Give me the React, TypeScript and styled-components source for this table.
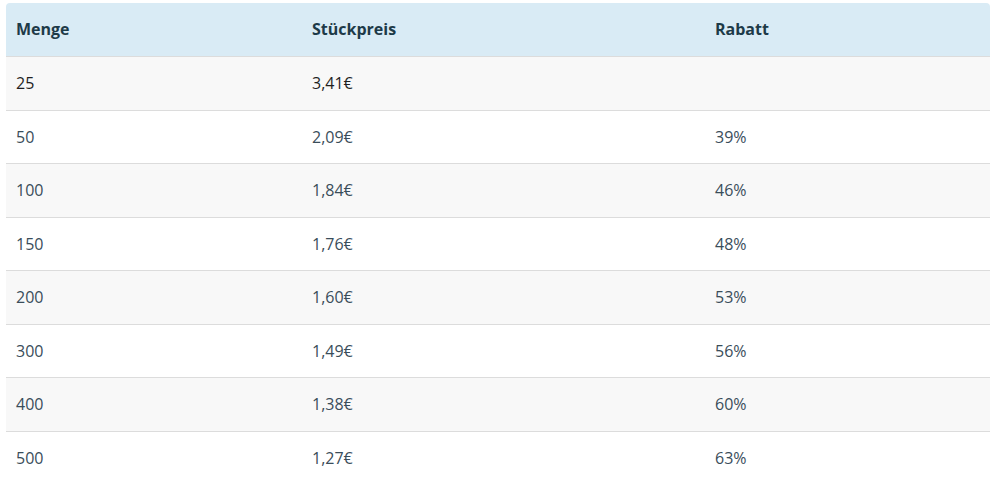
import React from "react";
import styled, { createGlobalStyle } from "styled-components";

const GlobalStyle = createGlobalStyle`
  body {
    margin: 0;
    background: #ffffff;
    font-family: "Open Sans", "Noto Sans", sans-serif;
  }
`;

const rows = [
  { menge: "25", preis: "3,41€", rabatt: "" },
  { menge: "50", preis: "2,09€", rabatt: "39%" },
  { menge: "100", preis: "1,84€", rabatt: "46%" },
  { menge: "150", preis: "1,76€", rabatt: "48%" },
  { menge: "200", preis: "1,60€", rabatt: "53%" },
  { menge: "300", preis: "1,49€", rabatt: "56%" },
  { menge: "400", preis: "1,38€", rabatt: "60%" },
  { menge: "500", preis: "1,27€", rabatt: "63%" },
];

export default function App() {
  return (
    <>
      <GlobalStyle />
      <StyledPage>
        <StyledTable>
          <colgroup>
            <col style={{ width: 296 }} />
            <col style={{ width: 403 }} />
            <col />
          </colgroup>
          <thead>
            <tr>
              <StyledHead $first>Menge</StyledHead>
              <StyledHead>Stückpreis</StyledHead>
              <StyledHead $last>Rabatt</StyledHead>
            </tr>
          </thead>
          <tbody>
            {rows.map((row, i) => (
              <StyledRow key={row.menge} $striped={i % 2 === 0} $dark={i === 0}>
                <StyledCell>{row.menge}</StyledCell>
                <StyledCell>{row.preis}</StyledCell>
                <StyledCell>{row.rabatt}</StyledCell>
              </StyledRow>
            ))}
          </tbody>
        </StyledTable>
      </StyledPage>
    </>
  );
}

const StyledPage = styled.div`
  padding: 3px 8px 0 6px;
`;

const StyledTable = styled.table`
  width: 100%;
  border-collapse: separate;
  border-spacing: 0;
  table-layout: fixed;
  font-size: 16px;
`;

const StyledHead = styled.th<{ $first?: boolean; $last?: boolean }>`
  height: 53px;
  box-sizing: border-box;
  padding: 0 10px 1px;
  text-align: left;
  font-weight: 700;
  color: #1d3a48;
  background-color: #d9ebf5;
  border-top-left-radius: ${(p) => (p.$first ? "4px" : "0")};
  border-top-right-radius: ${(p) => (p.$last ? "4px" : "0")};
`;

const StyledRow = styled.tr<{ $striped: boolean; $dark: boolean }>`
  background-color: ${(p) => (p.$striped ? "#f8f8f8" : "#ffffff")};
  color: ${(p) => (p.$dark ? "#1f1f1f" : "#3a4d5a")};
`;

const StyledCell = styled.td`
  height: 53.5px;
  box-sizing: border-box;
  padding: 0 10px;
  border-top: 1px solid #dcdcdc;
`;
